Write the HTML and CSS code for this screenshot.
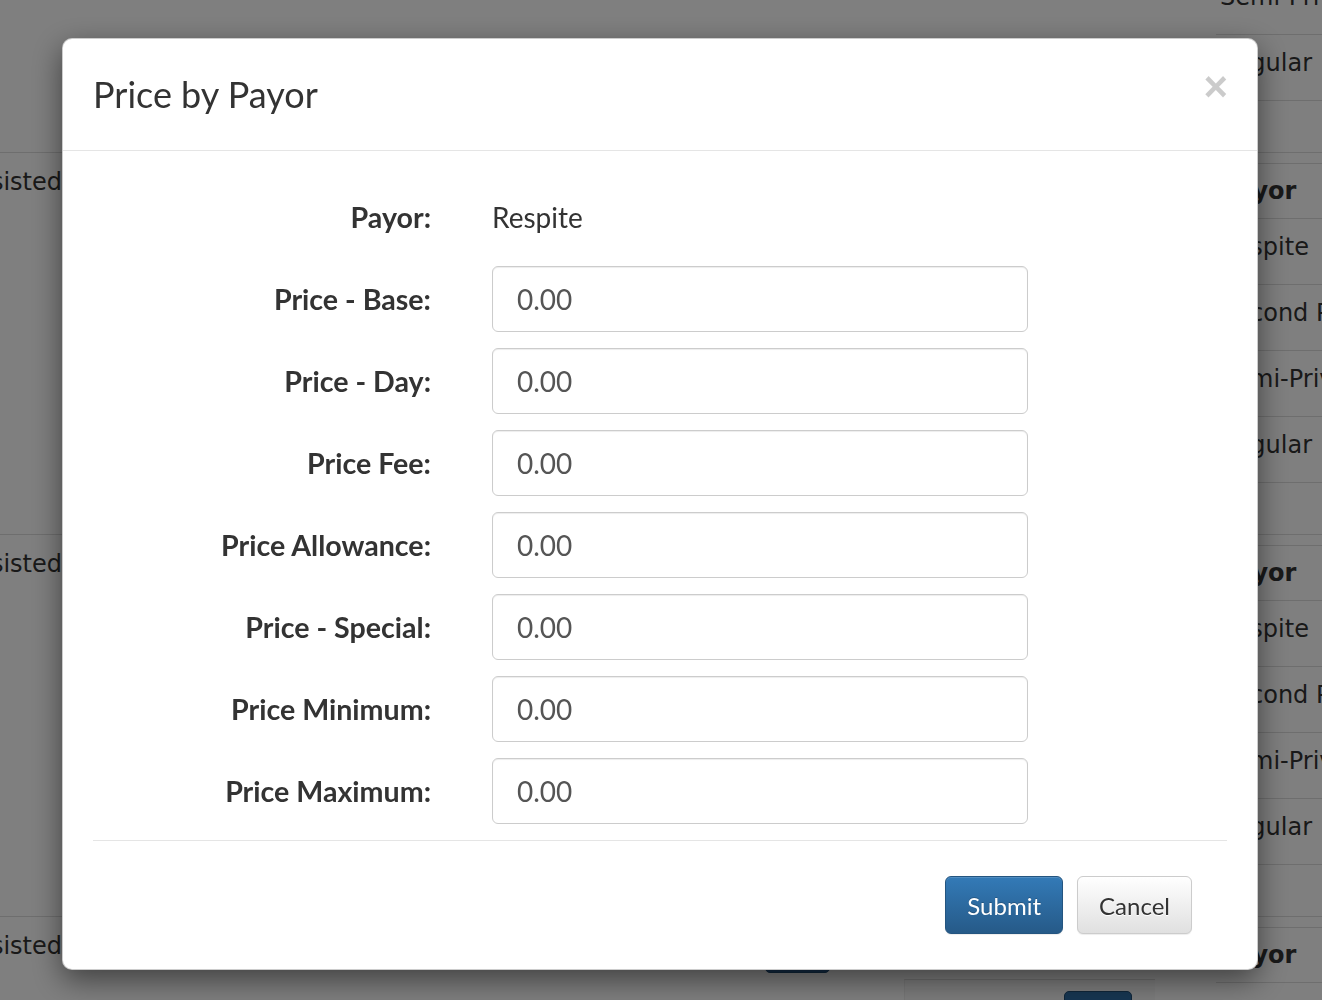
FILE: index.html
```html
<!DOCTYPE html>
<html lang="en">
<head>
<meta charset="utf-8">
<title>Price by Payor</title>
<link rel="stylesheet" href="styles.css">
</head>
<body>
<div class="page">
  <div class="col-left">
    <div class="lblock"><div class="lrow">Assisted</div></div>
    <div class="lblock"><div class="lrow">Assisted</div></div>
    <div class="lblock"><div class="lrow">Assisted</div></div>
    <div class="lblock"><div class="lrow">Assisted</div></div>
  </div>
  <div class="col-mid">
    <div class="mid-bottom">
      <div class="bg-btn bg-btn-a"></div>
      <div class="bg-box"><div class="bg-btn bg-btn-b"></div></div>
    </div>
  </div>
  <div class="col-right">
    <div class="rblock">
      <div class="thead">Payor</div>
      <div class="trow">Respite</div>
      <div class="trow">Second Person</div>
      <div class="trow">Semi-Private</div>
      <div class="trow">Regular</div>
    </div>
    <div class="rblock">
      <div class="thead">Payor</div>
      <div class="trow">Respite</div>
      <div class="trow">Second Person</div>
      <div class="trow">Semi-Private</div>
      <div class="trow">Regular</div>
    </div>
    <div class="rblock">
      <div class="thead">Payor</div>
      <div class="trow">Respite</div>
      <div class="trow">Second Person</div>
      <div class="trow">Semi-Private</div>
      <div class="trow">Regular</div>
    </div>
    <div class="rblock">
      <div class="thead">Payor</div>
      <div class="trow">Respite</div>
      <div class="trow">Second Person</div>
      <div class="trow">Semi-Private</div>
      <div class="trow">Regular</div>
    </div>
  </div>
</div>

<div class="backdrop"></div>

<div class="modal">
  <div class="modal-header">
    <button class="close" type="button">&times;</button>
    <h4 class="modal-title">Price by Payor</h4>
  </div>
  <div class="modal-body">
    <div class="form-grid">
      <label class="flabel">Payor:</label>
      <div class="static">Respite</div>
      <label class="flabel">Price - Base:</label>
      <input class="finput" type="text" value="0.00">
      <label class="flabel">Price - Day:</label>
      <input class="finput" type="text" value="0.00">
      <label class="flabel">Price Fee:</label>
      <input class="finput" type="text" value="0.00">
      <label class="flabel">Price Allowance:</label>
      <input class="finput" type="text" value="0.00">
      <label class="flabel">Price - Special:</label>
      <input class="finput" type="text" value="0.00">
      <label class="flabel">Price Minimum:</label>
      <input class="finput" type="text" value="0.00">
      <label class="flabel">Price Maximum:</label>
      <input class="finput" type="text" value="0.00">
    </div>
  </div>
  <div class="modal-footer">
    <button class="btn btn-primary" type="button">Submit</button>
    <button class="btn btn-default" type="button">Cancel</button>
  </div>
</div>
</body>
</html>
```

FILE: styles.css
```css
html, body {
  margin: 0;
  padding: 0;
  height: 100%;
  overflow: hidden;
  background: #fff;
}

body {
  font-family: "DejaVu Sans", sans-serif;
  color: #333;
}

/* ---------- background page ---------- */
.page {
  display: grid;
  grid-template-columns: 62px 1154px 1fr;
  margin-top: -230px;
  height: 1230px;
  overflow: hidden;
  font-size: 24px;
}

.col-left {
  overflow: hidden;
}

.lblock {
  height: 381px;
  border-top: 1px solid #ddd;
}

.lrow {
  margin-left: -38px;
  height: 58px;
  line-height: 58px;
  white-space: nowrap;
}

.col-mid {
  display: flex;
  flex-direction: column;
  justify-content: flex-end;
}

.mid-bottom {
  display: flex;
  align-items: flex-start;
  height: 40px;
}

.bg-btn {
  background: #2e6da4;
  border: 1px solid #204d74;
  border-radius: 5px;
  box-sizing: border-box;
  height: 40px;
}

.bg-btn-a {
  width: 65px;
  height: 13px;
  margin-left: 703px;
  border-radius: 0 0 5px 5px;
  background: #26588a;
}

.bg-box {
  width: 250px;
  height: 60px;
  margin-left: 74px;
  margin-top: 19px;
  border-top: 1px solid #ddd;
  border-left: 1px solid #eee;
  background: #f9f9f9;
}

.bg-btn-b {
  width: 68px;
  margin-left: 159px;
  margin-top: 11px;
}

.col-right {
  overflow: hidden;
}

.rblock {
  border-top: 1px solid #ddd;
  padding-top: 10px;
  height: 371px;
}

.thead {
  border-top: 1px solid #ddd;
  border-bottom: 1px solid #ddd;
  height: 54px;
  line-height: 54px;
  font-weight: bold;
  padding-left: 4px;
  white-space: nowrap;
}

.trow {
  height: 65px;
  line-height: 56px;
  border-bottom: 1px solid #ddd;
  padding-left: 4px;
  white-space: nowrap;
}

.backdrop {
  position: fixed;
  inset: 0;
  background: #000;
  opacity: 0.5;
}

/* ---------- modal ---------- */
.modal {
  position: fixed;
  left: 62px;
  top: 38px;
  width: 1196px;
  box-sizing: border-box;
  background: #fff;
  border: 1px solid rgba(0, 0, 0, 0.2);
  border-radius: 10px;
  box-shadow: 0 10px 30px rgba(0, 0, 0, 0.5);
  font-family: Lato, "Open Sans", sans-serif;
  color: #333;
}

.modal-header {
  padding: 30px;
  border-bottom: 1px solid #e5e5e5;
}

.modal-title {
  margin: 0;
  font-size: 36px;
  line-height: 51px;
  font-weight: normal;
}

.close {
  float: right;
  margin-top: -3px;
  margin-right: -1px;
  padding: 0;
  border: 0;
  background: transparent;
  font-family: "Liberation Sans", Arial, sans-serif;
  font-size: 42px;
  font-weight: bold;
  line-height: 1;
  color: #000;
  opacity: 0.2;
  cursor: pointer;
}

.modal-body {
  padding: 33px 30px 16px;
}

.form-grid {
  display: grid;
  grid-template-columns: 338px 536px;
  column-gap: 61px;
  row-gap: 16px;
}

.flabel {
  display: block;
  text-align: right;
  font-weight: bold;
  font-size: 28.6px;
  line-height: 66px;
  height: 66px;
  white-space: nowrap;
}

.static {
  font-size: 28px;
  line-height: 66px;
  height: 66px;
}

.finput {
  display: block;
  box-sizing: border-box;
  width: 536px;
  height: 66px;
  margin: 0;
  padding: 0 24px;
  border: 1px solid #ccc;
  border-radius: 6px;
  box-shadow: inset 0 1px 1px rgba(0, 0, 0, 0.075);
  font-family: Lato, "Open Sans", sans-serif;
  font-size: 28px;
  color: #555;
  background: #fff;
}

.modal-footer {
  margin: 0 30px;
  border-top: 1px solid #e5e5e5;
  padding: 35px 35px 35px;
  display: flex;
  justify-content: flex-end;
  gap: 14px;
}

.btn {
  height: 58px;
  padding: 0 21px;
  border-radius: 6px;
  font-family: Lato, "Open Sans", sans-serif;
  font-size: 24px;
  cursor: pointer;
}

.btn-primary {
  color: #fff;
  background-image: linear-gradient(to bottom, #337ab7 0, #265a88 100%);
  border: 1px solid #245580;
  text-shadow: 0 -1px 0 rgba(0, 0, 0, 0.2);
  box-shadow: inset 0 1px 0 rgba(255, 255, 255, 0.15), 0 1px 1px rgba(0, 0, 0, 0.075);
}

.btn-default {
  color: #333;
  background-image: linear-gradient(to bottom, #fff 0, #e0e0e0 100%);
  border: 1px solid #ccc;
  text-shadow: 0 1px 0 #fff;
  box-shadow: inset 0 1px 0 rgba(255, 255, 255, 0.15), 0 1px 1px rgba(0, 0, 0, 0.075);
}
```
